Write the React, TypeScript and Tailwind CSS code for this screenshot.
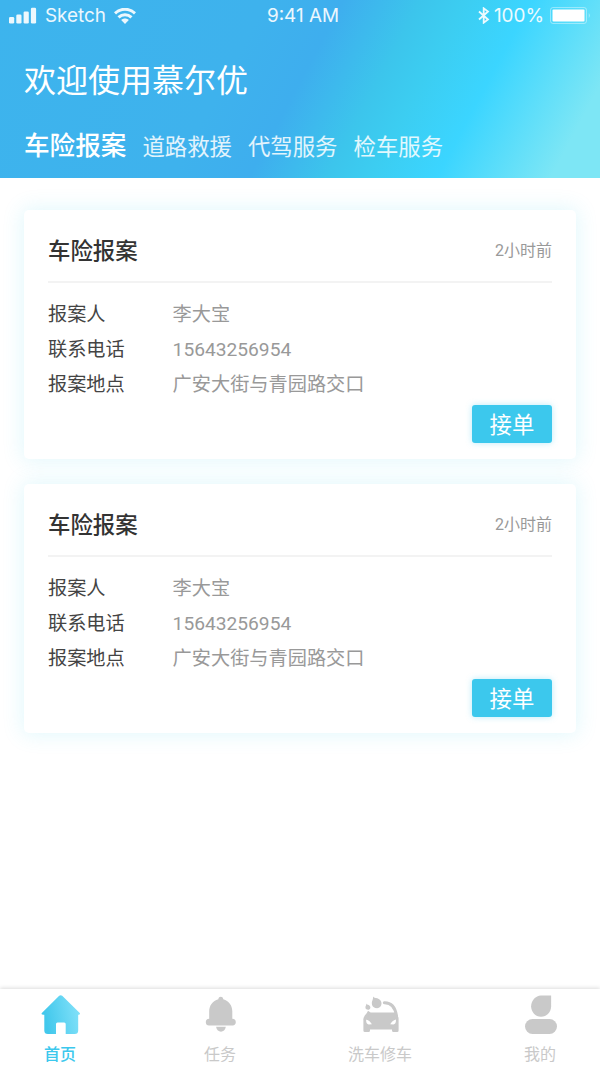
import React from "react";

const tabs = ["道路救援", "代驾服务", "检车服务"];

const reports = [
  { id: 1, name: "李大宝", phone: "15643256954", place: "广安大街与青园路交口" },
  { id: 2, name: "李大宝", phone: "15643256954", place: "广安大街与青园路交口" },
];

function StatusBar() {
  return (
    <div className="grid h-8 grid-cols-3 items-center pr-[9px] pl-[9px] font-['Inter','Liberation_Sans',sans-serif] text-[18.5px] text-white/90">
      <div className="flex items-center">
        <svg width="28" height="17" viewBox="0 0 28 17" fill="currentColor">
          <rect x="0" y="10" width="5.2" height="6.5" rx="1.3" />
          <rect x="7.3" y="7.5" width="5.2" height="9" rx="1.3" />
          <rect x="14.6" y="4.5" width="5.2" height="12" rx="1.3" />
          <rect x="21.9" y=".7" width="5.2" height="15.8" rx="1.3" />
        </svg>
        <span className="ml-2 w-[62px] whitespace-nowrap text-[18.9px]">Sketch</span>
        <svg className="ml-[7px]" width="22" height="16" viewBox="0 0 22 16" fill="none" stroke="currentColor" strokeWidth="3">
          <path d="M1 5.300C6.700-.1 15.300-.1 21 5.300" />
          <path d="M4.500 9.300c3.800-3.500 9.200-3.500 13 0" />
          <path d="M7.200 12c2.200-2 5.400-2 7.600 0L11 15.900z" fill="currentColor" stroke="none" />
        </svg>
      </div>
      <div className="pl-[6px] text-center whitespace-nowrap text-[18.9px]">9:41 AM</div>
      <div className="flex items-center justify-end">
        <svg width="12" height="17" viewBox="0 0 12 17" fill="none" stroke="currentColor" strokeWidth="1.8">
          <path d="M1 4.500l9 8-4.300 3.200V1.300L10 4.500l-9 8" />
        </svg>
        <span className="mr-[6px] ml-[4px] whitespace-nowrap text-[18.9px]">100%</span>
        <svg width="41" height="17" viewBox="0 0 41 17">
          <rect x=".5" y=".5" width="36" height="16" rx="2.5" fill="none" stroke="white" strokeOpacity=".4" />
          <rect x="2.5" y="2.5" width="32" height="12" rx="1" fill="white" />
          <path d="M38.800 6v5q1.900-2.500 0-5z" fill="white" fillOpacity=".5" />
        </svg>
      </div>
    </div>
  );
}

function Field({ label, value }: { label: string; value: string }) {
  return (
    <div className="flex h-[35.2px] items-baseline text-[19.2px] leading-[35.2px]">
      <dt className="w-[124.6px] text-[#444]">{label}</dt>
      <dd className="font-['Roboto','Noto_Sans_CJK_SC',sans-serif] text-[#999]">{value}</dd>
    </div>
  );
}

function ReportCard({ name, phone, place }: { name: string; phone: string; place: string }) {
  return (
    <article className="flex h-[249px] flex-col rounded-[5px] bg-white px-6 shadow-[0_0_20px_2px_rgba(60,210,235,0.15)]">
      <header className="flex h-[73px] shrink-0 items-center justify-between border-b-2 border-[#f3f3f3] pt-[8px]">
        <h2 className="text-[22.4px] font-medium text-[#333]">车险报案</h2>
        <span className="pt-[3px] font-['Roboto','Noto_Sans_CJK_SC',sans-serif] text-base text-[#999]">2小时前</span>
      </header>
      <dl className="mt-[12.6px]">
        <Field label="报案人" value={name} />
        <Field label="联系电话" value={phone} />
        <Field label="报案地点" value={place} />
      </dl>
      <button className="mt-[3.4px] flex h-[38.4px] w-20 shrink-0 items-center justify-center self-end rounded-[3px] bg-[#3cc8ed] text-[22.4px] text-white shadow-[0_0_6px_rgba(60,200,237,0.35)]">
        接单
      </button>
    </article>
  );
}

function HomeIcon() {
  return (
    <svg width="40" height="40" viewBox="0 0 40 40">
      <defs>
        <linearGradient id="home" x1="0" y1=".6" x2="1" y2=".4">
          <stop offset=".1" stopColor="#42c8ec" />
          <stop offset="1" stopColor="#82e1f9" />
        </linearGradient>
      </defs>
      <path
        fill="url(#home)"
        d="M19.200.8q1.500-1.200 3 0l17.300 16.900c1.200 1.200.3 2-1.300 2v15.800q0 3.500-3.500 3.500h-9V29q0-1.500-1.500-1.500h-6.700q-1.500 0-1.500 1.500v10H7.800q-3.500 0-3.500-3.500V19.700c-2.500 0-3.500-.8-2.200-2z"
      />
    </svg>
  );
}

function BellIcon() {
  return (
    <svg width="40" height="40" viewBox="0 0 40 40" fill="#c9c9c9">
      <path d="M18.300 4.300c.3-3.300 4.700-3.300 5 0 5.500 1.700 9 6.200 9 12v7.500c2.500.2 3.500 1.500 3.500 3.400s-1.200 3.300-3.200 3.300H9c-2 0-3.200-1.300-3.200-3.300s1-3.200 3.400-3.400v-7.500c0-5.800 3.600-10.300 9.100-12z" />
      <path d="M16.100 31.800h9.700c-1 6.500-8.700 6.500-9.700 0z" />
    </svg>
  );
}

function CarIcon() {
  return (
    <svg width="40" height="40" viewBox="0 0 40 40" fill="#c9c9c9">
      <path
        fillRule="evenodd"
        d="M8 17.500h27q3.600 2.500 3.600 6.500v11.500q0 1.500-1.500 1.500h-3.600q-1.500 0-1.500-1.500V34.500H10v1q0 1.500-1.500 1.500H4.900q-1.500 0-1.500-1.500V24q.5-4 4.600-6.500zM6.200 24.400c-.3 3 .5 4.800 2.500 5.100l3.200-.3c-1.200-2.400-3.200-4.100-5.700-4.800zm29.700 0c-2.500.7-4.500 2.400-5.700 4.800l3.200.3c2-.3 2.800-2.100 2.500-5.100z"
      />
      <path d="M3.500 24.500L8 15.800l2.500 1.700-4 7z" />
      <path d="M24.300 7.700c6.500-.2 10.700 3.500 12.200 13" fill="none" stroke="#c9c9c9" strokeWidth="3" strokeLinecap="round" />
      <path d="M13 1.500c.8 1.300 2.300 1.300 4.300 1.800 5.900 1.700 5.500 9.600-.2 9.900-5.500 0-6-5.500-4.600-8q.8-1.900.5-3.700z" />
      <path d="M6.200 8.400c.5 1 1.500 1 2.500 1.500 3 1.500 1.600 5-.7 4.900-2.500 0-2.900-2.300-2.300-3.700.5-1 .8-1.700.5-2.700z" />
    </svg>
  );
}

function UserIcon() {
  return (
    <svg width="40" height="40" viewBox="0 0 40 40" fill="#c9c9c9">
      <path d="M20.800.5h10.300v10.800c0 6-4.500 10.500-10.100 10.500s-9.900-4.800-9.900-10.500S15.800.5 20.800.5z" />
      <rect x="5" y="24" width="32" height="15" rx="7.5" />
    </svg>
  );
}

const navItems = [
  { label: "首页", Icon: HomeIcon, active: true },
  { label: "任务", Icon: BellIcon, active: false },
  { label: "洗车修车", Icon: CarIcon, active: false },
  { label: "我的", Icon: UserIcon, active: false },
];

export default function App() {
  return (
    <div className="flex h-[1067px] w-[600px] flex-col overflow-hidden bg-white font-['Noto_Sans_CJK_SC',sans-serif]">
      <div className="h-[178px] shrink-0 bg-[linear-gradient(118deg,#3db4ed_0px,#3eb2ed_235px,#3eaeee_303px,#3cc5ec_372px,#3ccdf1_410px,#3bd5ff_469px,#7de6f5_570px)]">
        <StatusBar />
        <h1 className="mt-[22px] pl-6 text-[32px] leading-[48px] text-white">欢迎使用慕尔优</h1>
        <nav className="mt-[24px] flex items-baseline gap-4 pl-6 leading-9">
          <span className="text-[25.6px] font-medium text-white">车险报案</span>
          {tabs.map((tab) => (
            <span key={tab} className="text-[22.4px] text-white/85">{tab}</span>
          ))}
        </nav>
      </div>
      <main className="flex flex-1 flex-col gap-[25px] px-6 pt-8">
        {reports.map((report) => (
          <ReportCard key={report.id} name={report.name} phone={report.phone} place={report.place} />
        ))}
      </main>
      <nav className="flex h-[78px] shrink-0 justify-between bg-white px-5 pt-[6px] shadow-[0_-1px_4px_rgba(0,0,0,0.14)]">
        {navItems.map(({ label, Icon, active }) => (
          <div key={label} className="flex w-20 flex-col items-center">
            <Icon />
            <span className={active ? "mt-[6px] text-base font-medium text-[#3cc8ed]" : "mt-[6px] text-base text-[#c9c9c9]"}>
              {label}
            </span>
          </div>
        ))}
      </nav>
    </div>
  );
}
